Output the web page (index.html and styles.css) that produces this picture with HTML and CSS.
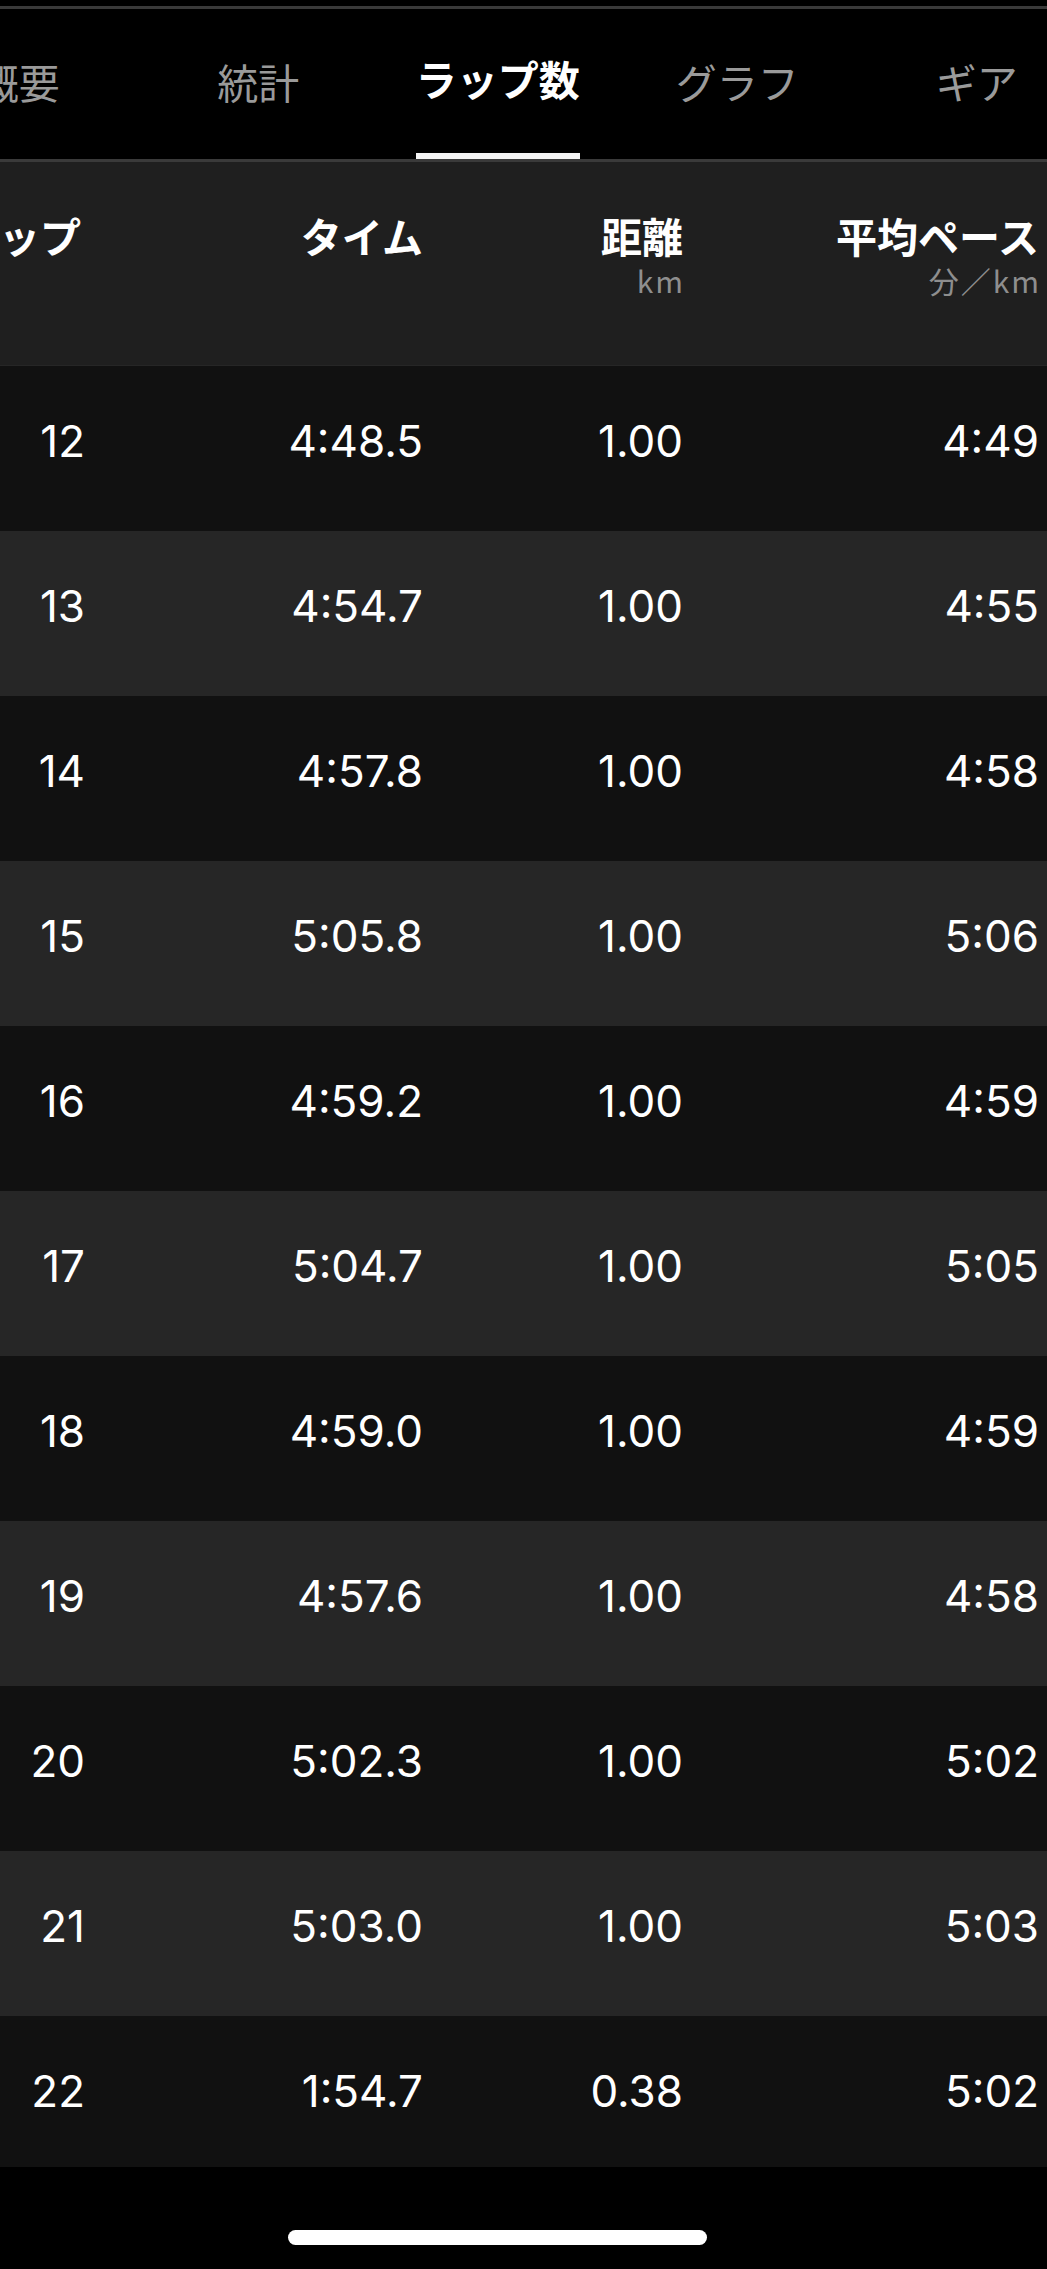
FILE: index.html
```html
<!DOCTYPE html>
<html lang="ja">
<head>
    <meta charset="UTF-8">
    <title>ラップ数</title>
    <link rel="stylesheet" href="styles.css">
</head>
<body>
    <div class="screen">
        <div class="top-line"></div>
        <nav class="tabs">
            <div class="tab"><div class="tab-inner"><span class="label">概要</span></div></div>
            <div class="tab"><div class="tab-inner"><span class="label">統計</span></div></div>
            <div class="tab active"><div class="tab-inner"><span class="label">ラップ数</span><span class="bar"></span></div></div>
            <div class="tab"><div class="tab-inner"><span class="label">グラフ</span></div></div>
            <div class="tab"><div class="tab-inner"><span class="label">ギア</span></div></div>
        </nav>
        <div class="tab-line"></div>

        <div class="laps">
            <div class="row head">
                <div class="cell"><span class="title">ラップ</span></div>
                <div class="cell"><span class="title">タイム</span></div>
                <div class="cell"><span class="title">距離</span><span class="unit">km</span></div>
                <div class="cell"><span class="title">平均ペース</span><span class="unit">分／km</span></div>
            </div>
            <div id="lapRows"></div>
        </div>

        <div class="home-area">
            <div class="home-bar"></div>
        </div>
    </div>

    <script>
        // ラップデータ
        const laps = [
            ['12', '4:48.5', '1.00', '4:49'],
            ['13', '4:54.7', '1.00', '4:55'],
            ['14', '4:57.8', '1.00', '4:58'],
            ['15', '5:05.8', '1.00', '5:06'],
            ['16', '4:59.2', '1.00', '4:59'],
            ['17', '5:04.7', '1.00', '5:05'],
            ['18', '4:59.0', '1.00', '4:59'],
            ['19', '4:57.6', '1.00', '4:58'],
            ['20', '5:02.3', '1.00', '5:02'],
            ['21', '5:03.0', '1.00', '5:03'],
            ['22', '1:54.7', '0.38', '5:02']
        ];

        function renderLaps() {
            const box = document.getElementById('lapRows');
            box.innerHTML = laps.map((lap, i) => `
                <div class="row ${i % 2 === 0 ? 'dark' : 'light'}">
                    ${lap.map(v => `<div class="cell">${v}</div>`).join('')}
                </div>
            `).join('');
        }
        renderLaps();
    </script>
</body>
</html>
```

FILE: styles.css
```css
body {
    margin: 0;
    padding: 0;
    background: #000;
    font-family: "Noto Sans CJK JP", "Noto Sans", sans-serif;
    color: #fff;
}
.screen {
    width: 1047px;
    height: 2269px;
    overflow: hidden;
    background: #000;
}
.top-line {
    margin-top: 6px;
    height: 3px;
    background: #3a3a3a;
}
.tabs {
    display: flex;
    height: 150px;
    margin-left: -101px;
}
.tab {
    flex: none;
    width: 239.5px;
    display: flex;
    justify-content: center;
}
.tab-inner {
    display: flex;
    flex-direction: column;
    align-items: center;
    height: 100%;
    padding: 0 2px;
}
.label {
    flex: 1;
    display: flex;
    align-items: center;
    padding-bottom: 6px;
    font-size: 41px;
    line-height: 1;
    color: #9a9a9a;
    white-space: nowrap;
}
.tab.active .label {
    color: #fff;
    font-weight: bold;
}
.bar {
    align-self: stretch;
    height: 6px;
    background: #f4f4f4;
}
.tab-line {
    height: 3px;
    background: #3a3a3a;
}
.laps {
    height: 2005px;
    overflow: hidden;
}
.row {
    display: grid;
    grid-template-columns: 85px 338px 260px 356px 8px;
    height: 165px;
    box-sizing: border-box;
}
.row.dark {
    background: #111111;
}
.row.light {
    background: #262626;
}
.row.head {
    height: 204px;
    background: #1f1f1f;
    border-bottom: 1px solid #262626;
}
.cell {
    display: flex;
    flex-direction: column;
    align-items: flex-end;
    padding-top: 53px;
    font-family: "Inter", "Liberation Sans", sans-serif;
    font-size: 44px;
    line-height: 1;
    white-space: nowrap;
}
.head .cell {
    font-family: "Noto Sans CJK JP", "Noto Sans", sans-serif;
}
.head .cell:first-child {
    padding-right: 4px;
}
.title {
    font-size: 41px;
    font-weight: bold;
    line-height: 1;
}
.unit {
    margin-top: 9px;
    margin-right: -2px;
    font-size: 30px;
    letter-spacing: 2px;
    line-height: 1;
    color: #8e8e8e;
}
.home-area {
    height: 102px;
    padding: 63px 0 0 288px;
    box-sizing: border-box;
}
.home-bar {
    width: 419px;
    height: 15px;
    border-radius: 8px;
    background: #fff;
}
```
